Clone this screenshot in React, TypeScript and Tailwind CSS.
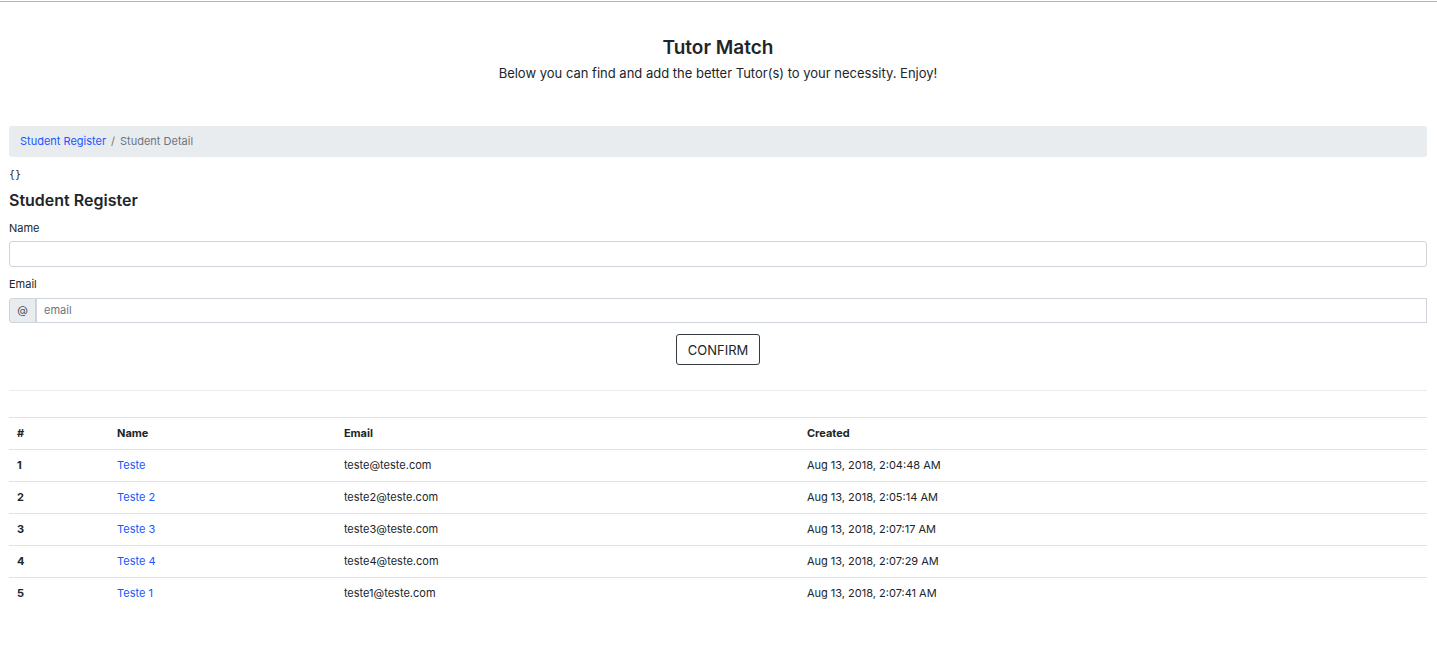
const students = [
  { id: 1, name: 'Teste', email: 'teste@teste.com', created: 'Aug 13, 2018, 2:04:48 AM' },
  { id: 2, name: 'Teste 2', email: 'teste2@teste.com', created: 'Aug 13, 2018, 2:05:14 AM' },
  { id: 3, name: 'Teste 3', email: 'teste3@teste.com', created: 'Aug 13, 2018, 2:07:17 AM' },
  { id: 4, name: 'Teste 4', email: 'teste4@teste.com', created: 'Aug 13, 2018, 2:07:29 AM' },
  { id: 5, name: 'Teste 1', email: 'teste1@teste.com', created: 'Aug 13, 2018, 2:07:41 AM' },
];

function Header() {
  return (
    <header className="pt-[31px] text-center">
      <h1 className="text-[19px] leading-[30px] font-semibold">Tutor Match</h1>
      <p className="text-[13px] leading-5">Below you can find and add the better Tutor(s) to your necessity. Enjoy!</p>
    </header>
  );
}

function Breadcrumb() {
  return (
    <nav aria-label="Breadcrumb" className="mt-[43px] rounded-[3px] bg-[#e9ecef] px-[11px] py-[7px]">
      <ol className="flex">
        <li><a href="#register" className="text-[#1a56ff]">Student Register</a></li>
        <li className="text-[#6c757d]"><span className="px-[5px]">/</span>Student Detail</li>
      </ol>
    </nav>
  );
}

function RegisterForm() {
  return (
    <form onSubmit={(e) => e.preventDefault()}>
      <h2 className="mt-[7px] text-base leading-5 font-semibold">Student Register</h2>
      <label htmlFor="name" className="mt-[10px] block">Name</label>
      <input id="name" type="text" className="mt-1 block h-[26px] w-full rounded-[3px] border border-[#ced4da] bg-white px-[7px]" />
      <label htmlFor="email" className="mt-[9px] block">Email</label>
      <div className="mt-[5px] flex h-[25px]">
        <span className="flex w-[27px] items-center justify-center rounded-l-[3px] border border-[#ced4da] bg-[#e9ecef] text-[#495057]">@</span>
        <input id="email" type="email" placeholder="email" className="min-w-0 flex-1 border border-[#ced4da] bg-white px-[7px] placeholder:text-[#6c757d]" />
      </div>
      <div className="mt-[11px] flex justify-center">
        <button type="submit" className="h-[31px] rounded-[3px] border border-[#343a40] px-[11px] text-[13px] leading-5">CONFIRM</button>
      </div>
    </form>
  );
}

function StudentTable() {
  return (
    <table className="mt-[26px] w-full table-fixed text-left">
      <colgroup>
        <col className="w-[100px]" />
        <col className="w-[16%]" />
        <col className="w-[463px]" />
        <col />
      </colgroup>
      <thead>
        <tr className="h-8 border-t border-[#dee2e6]">
          <th className="px-2 font-bold">#</th>
          <th className="px-2 font-bold">Name</th>
          <th className="px-2 font-bold">Email</th>
          <th className="px-2 font-bold">Created</th>
        </tr>
      </thead>
      <tbody>
        {students.map((s) => (
          <tr key={s.id} className="h-8 border-t border-[#dee2e6]">
            <th scope="row" className="px-2 font-bold">{s.id}</th>
            <td className="px-2"><a href={`#student-${s.id}`} className="text-[#1a56ff]">{s.name}</a></td>
            <td className="px-2">{s.email}</td>
            <td className="px-2">{s.created}</td>
          </tr>
        ))}
      </tbody>
    </table>
  );
}

export default function App() {
  return (
    <div className="bg-white pt-px font-['Inter',sans-serif] text-[11px] leading-[17px] text-[#212529]">
      <div className="border-t border-[#b5b5b5] pr-[10px] pl-[9px]">
        <Header />
        <Breadcrumb />
        <pre className="mt-[9px] font-['DejaVu_Sans_Mono',monospace] text-[10px] leading-[17px]">{'{}'}</pre>
        <RegisterForm />
        <hr className="mt-[25px] border-[#e9ecef]" />
        <StudentTable />
      </div>
    </div>
  );
}
